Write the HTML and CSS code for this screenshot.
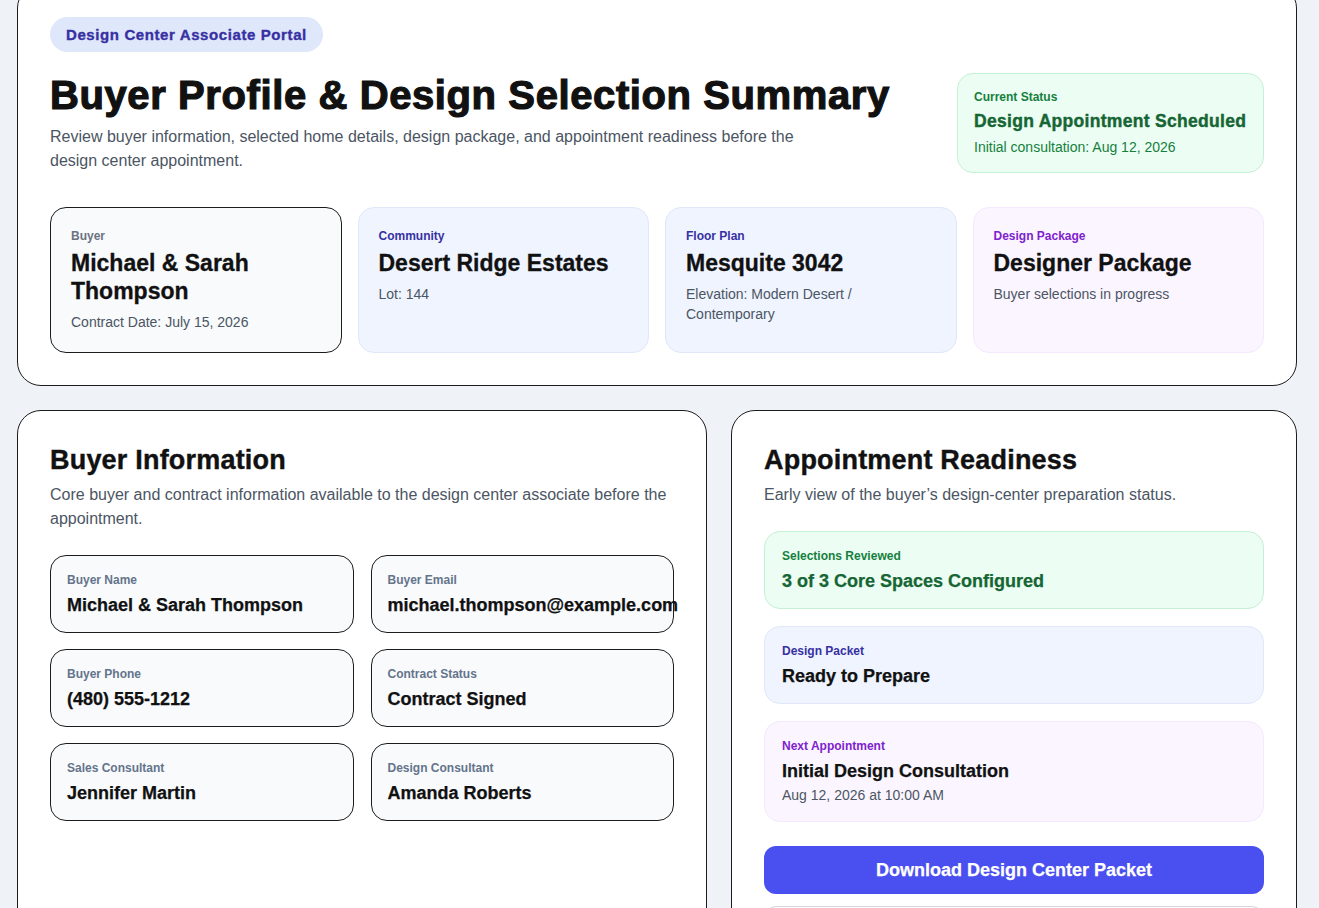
FILE: index.html
```html
<!DOCTYPE html>
<html lang="en">
<head>
  <meta charset="UTF-8">
  <meta name="viewport" content="width=device-width, initial-scale=1">
  <title>Buyer Profile &amp; Design Selection Summary</title>
  <link rel="stylesheet" href="styles.css">
</head>
<body>
  <main class="page">
    <!-- Summary header -->
    <section class="panel summary">
      <span class="badge">Design Center Associate Portal</span>
      <div class="summary-head">
        <div>
          <h1>Buyer Profile &amp; Design Selection Summary</h1>
          <p class="lead">Review buyer information, selected home details, design package, and appointment readiness before the design center appointment.</p>
        </div>
        <div class="status">
          <div class="status-label">Current Status</div>
          <div class="status-title">Design Appointment Scheduled</div>
          <div class="status-sub">Initial consultation: Aug 12, 2026</div>
        </div>
      </div>

      <div class="overview">
        <div class="ov-card ov-buyer">
          <div class="ov-label">Buyer</div>
          <div class="ov-title">Michael &amp; Sarah Thompson</div>
          <div class="ov-sub">Contract Date: July 15, 2026</div>
        </div>
        <div class="ov-card ov-blue">
          <div class="ov-label">Community</div>
          <div class="ov-title">Desert Ridge Estates</div>
          <div class="ov-sub">Lot: 144</div>
        </div>
        <div class="ov-card ov-blue">
          <div class="ov-label">Floor Plan</div>
          <div class="ov-title">Mesquite 3042</div>
          <div class="ov-sub">Elevation: Modern Desert / Contemporary</div>
        </div>
        <div class="ov-card ov-purple">
          <div class="ov-label">Design Package</div>
          <div class="ov-title">Designer Package</div>
          <div class="ov-sub">Buyer selections in progress</div>
        </div>
      </div>
    </section>

    <div class="columns">
      <!-- Buyer info -->
      <section class="panel">
        <h2>Buyer Information</h2>
        <p class="desc">Core buyer and contract information available to the design center associate before the appointment.</p>
        <div class="fields">
          <div class="field">
            <div class="field-label">Buyer Name</div>
            <div class="field-value">Michael &amp; Sarah Thompson</div>
          </div>
          <div class="field">
            <div class="field-label">Buyer Email</div>
            <div class="field-value">michael.thompson@example.com</div>
          </div>
          <div class="field">
            <div class="field-label">Buyer Phone</div>
            <div class="field-value">(480) 555-1212</div>
          </div>
          <div class="field">
            <div class="field-label">Contract Status</div>
            <div class="field-value">Contract Signed</div>
          </div>
          <div class="field">
            <div class="field-label">Sales Consultant</div>
            <div class="field-value">Jennifer Martin</div>
          </div>
          <div class="field">
            <div class="field-label">Design Consultant</div>
            <div class="field-value">Amanda Roberts</div>
          </div>
        </div>
        <div class="spacer"></div>
      </section>

      <!-- Readiness -->
      <section class="panel">
        <h2>Appointment Readiness</h2>
        <p class="desc">Early view of the buyer’s design-center preparation status.</p>
        <div class="ready">
          <div class="ready-item green">
            <div class="ready-label">Selections Reviewed</div>
            <div class="ready-value">3 of 3 Core Spaces Configured</div>
          </div>
          <div class="ready-item blue">
            <div class="ready-label">Design Packet</div>
            <div class="ready-value">Ready to Prepare</div>
          </div>
          <div class="ready-item purple">
            <div class="ready-label">Next Appointment</div>
            <div class="ready-value">Initial Design Consultation</div>
            <div class="ready-sub">Aug 12, 2026 at 10:00 AM</div>
          </div>
        </div>
        <button class="btn btn-primary">Download Design Center Packet</button>
        <button class="btn btn-outline">Edit Buyer Profile</button>
      </section>
    </div>
  </main>
</body>
</html>
```

FILE: styles.css
```css
:root {
  --bg: #eff3f8;
  --ink: #111111;
  --muted: #4b5563;
  --line: #1c1c1c;
  --indigo: #3730a3;
  --purple: #7e22ce;
  --green: #15803d;
  --green-dark: #166534;
}
*, *::before, *::after { box-sizing: border-box; }
body {
  margin: 0; background: var(--bg); color: var(--ink);
  font-family: "Liberation Sans", Arial, sans-serif;
}
.page { box-sizing: content-box; width: 1280px; padding: 0 17px 40px; }

.panel {
  background: #fff; border: 1px solid var(--line);
  border-radius: 24px; padding: 32px;
}
.summary { margin-top: -16px; }

.badge {
  display: inline-block; padding: 8px 16px; border-radius: 999px;
  background: #dfe7fb; color: var(--indigo);
  font-size: 15px; line-height: 19px; font-weight: 700;
  letter-spacing: .6px; -webkit-text-stroke: .35px var(--indigo);
}
.summary-head {
  display: flex; justify-content: space-between; align-items: flex-start;
  gap: 32px; margin: 21px 0 34px;
}
h1 {
  margin: 0; font-size: 40px; line-height: 44px; font-weight: 700;
  letter-spacing: .6px; -webkit-text-stroke: 1.2px var(--ink);
}
.lead {
  margin: 8px 0 0; max-width: 770px;
  font-size: 16px; line-height: 24px; color: var(--muted);
}
.status {
  flex: 0 0 307px; padding: 15px 16px;
  background: #ecfdf3; border: 1px solid #c6f0d4; border-radius: 16px;
}
.status-label { font-size: 12px; line-height: 16px; font-weight: 700; color: var(--green); }
.status-title {
  margin-top: 4px; font-size: 17.5px; line-height: 24px;
  font-weight: 700; color: var(--green-dark); letter-spacing: .3px;
  -webkit-text-stroke: .4px var(--green-dark);
}
.status-sub { margin-top: 4px; font-size: 14px; line-height: 20px; color: var(--green); }

/* Overview cards */
.overview { display: grid; grid-template-columns: repeat(4, minmax(0, 1fr)); gap: 16px; }
.ov-card { padding: 20px; border-radius: 16px; border: 1px solid transparent; }
.ov-buyer { background: #f8fafc; border-color: var(--line); }
.ov-blue { background: #eff4ff; border-color: #dfe7f9; }
.ov-purple { background: #fbf5ff; border-color: #f4e9fd; }
.ov-label { font-size: 12px; line-height: 16px; font-weight: 700; color: #6b7280; }
.ov-blue .ov-label { color: var(--indigo); }
.ov-purple .ov-label { color: var(--purple); }
.ov-title {
  margin-top: 5px; font-size: 23px; line-height: 28px; font-weight: 700;
  -webkit-text-stroke: .3px var(--ink);
}
.ov-sub { margin-top: 7px; font-size: 14px; line-height: 20px; color: var(--muted); }

/* Lower columns */
.columns {
  display: grid; grid-template-columns: 690px minmax(0, 1fr); gap: 24px;
  margin-top: 24px; align-items: start;
}
h2 {
  margin: 0; font-size: 27px; line-height: 35px; font-weight: 700; letter-spacing: .2px;
  -webkit-text-stroke: .4px var(--ink);
}
.desc { margin: 5px 0 0; font-size: 16px; line-height: 24px; color: var(--muted); }

.fields {
  display: grid; grid-template-columns: repeat(2, minmax(0, 1fr)); gap: 16px 17px;
  margin-top: 24px;
}
.field {
  padding: 16px; border: 1px solid var(--line); border-radius: 16px;
  background: #f8fafc; white-space: nowrap;
}
.field-label { font-size: 12px; line-height: 16px; font-weight: 700; color: #64748b; }
.field-value {
  margin-top: 6px; font-size: 18px; line-height: 22px; font-weight: 700;
  -webkit-text-stroke: .25px var(--ink);
}
.spacer { height: 120px; }

.ready { display: flex; flex-direction: column; gap: 17px; margin-top: 24px; }
.ready-item { padding: 16px 17px; border-radius: 16px; border: 1px solid transparent; }
.ready-item.green { background: #ecfdf3; border-color: #c6f0d4; }
.ready-item.blue { background: #eff4ff; border-color: #dfe7f9; }
.ready-item.purple { background: #fbf5ff; border-color: #f4e9fd; }
.ready-label { font-size: 12px; line-height: 16px; font-weight: 700; color: var(--green); }
.blue .ready-label { color: var(--indigo); }
.purple .ready-label { color: var(--purple); }
.ready-value {
  margin-top: 6px; font-size: 18px; line-height: 22px; font-weight: 700;
  -webkit-text-stroke: .25px currentColor;
}
.green .ready-value { color: var(--green-dark); }
.ready-sub { margin-top: 3px; font-size: 14px; line-height: 20px; color: var(--muted); }

.btn {
  display: block; width: 100%; height: 48px; border-radius: 12px;
  font-family: inherit; font-size: 18px; font-weight: 700; cursor: pointer;
}
.btn-primary {
  margin-top: 24px; background: #4a4ff0; color: #fff; border: none;
  -webkit-text-stroke: .25px #fff;
}
.btn-outline { margin-top: 12px; background: #fff; color: var(--ink); border: 1px solid #d1d5db; }
```
